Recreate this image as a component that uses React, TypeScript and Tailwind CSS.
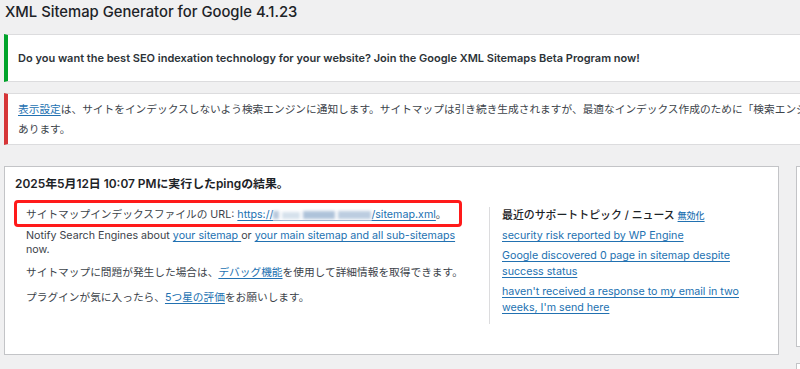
import React from 'react';

const font = { fontFamily: 'Inter, "Noto Sans CJK JP", sans-serif' };

function Link({ children }: { children: React.ReactNode }) {
  return (
    <a href="#" className="text-[#2271b1] underline underline-offset-[2px] decoration-[1px]">
      {children}
    </a>
  );
}

// blurred hostname in the sitemap url
function Blurred() {
  return (
    <span className="inline-flex items-center h-[10px] align-[-1px] gap-[3px] border-b border-[#9db6d3]">
      <span className="w-[6px] h-[8px] bg-[#b7c8dc] blur-[1.5px]" />
      <span className="w-[18px] h-[7px] bg-[#d6e1ec] blur-[1.5px]" />
      <span className="w-[32px] h-[8px] bg-[#aec3da] blur-[1.5px]" />
      <span className="w-[33px] h-[8px] bg-[#bccde0] blur-[1.5px]" />
    </span>
  );
}

export default function App() {
  return (
    <div className="w-[800px] h-[369px] overflow-hidden bg-[#f0f0f1] text-[#3c434a]" style={font}>
      <div className="w-[1100px] pl-[4px]">
        <h1 className="pl-[1px] pt-[3px] h-[22px] text-[14.8px] leading-[18px] font-medium text-[#1d2327]">
          XML Sitemap Generator for Google 4.1.23
        </h1>

        <div className="mt-[12px] h-[48px] flex items-center bg-white border border-[#dcdcde] border-l-[4px] border-l-[#00a32a] pl-[10px]">
          <p className="text-[11px] leading-[15px] font-semibold text-[#2c3338] whitespace-nowrap">
            Do you want the best SEO indexation technology for your website? Join the Google XML Sitemaps Beta Program now!
          </p>
        </div>

        <div className="mt-[11px] bg-white border border-[#dcdcde] border-l-[4px] border-l-[#d63638] pl-[10px] pt-[6px] pb-[4px]">
          <p className="text-[10.7px] leading-[20px] whitespace-nowrap">
            <Link>表示設定</Link>は、サイトをインデックスしないよう検索エンジンに通知します。サイトマップは引き続き生成されますが、最適なインデックス作成のために「検索エンジンがサイトをインデックスしないようにする」の設定を確認する必要が
            <br />
            あります。
          </p>
        </div>

        <div className="flex gap-[17px] mt-[21px] items-start">
          <div className="w-[775px] h-[189px] bg-white border border-[#c3c4c7] pl-[10px] pt-[8px]">
            <h3 className="text-[11.9px] leading-[17px] font-semibold text-[#1d2327]">
              2025年5月12日 10:07 PMに実行したpingの結果。
            </h3>
            <div className="flex mt-[15px] text-[10.7px]">
              <div className="w-[474px] pl-[11px]">
                <div className="relative leading-[15px] whitespace-nowrap">
                  サイトマップインデックスファイルの URL: <Link>https://<Blurred />/sitemap.xml</Link>。
                  <div className="absolute left-[-12px] top-[-7px] w-[448px] h-[27px] border-[3px] border-[#ff1a1a] rounded-[4px]" />
                </div>
                <p className="mt-[7px] leading-[14px]">
                  Notify Search Engines about <Link>your sitemap </Link> or <Link>your main sitemap and all sub-sitemaps</Link>
                  <br />
                  now.
                </p>
                <p className="mt-[8px] leading-[15px]">
                  サイトマップに問題が発生した場合は、<Link>デバッグ機能</Link>を使用して詳細情報を取得できます。
                </p>
                <p className="mt-[10px] leading-[15px]">
                  プラグインが気に入ったら、<Link>5つ星の評価</Link>をお願いします。
                </p>
              </div>
              <div className="h-[117px] border-l border-[#dcdcde] pl-[12px]">
                <h4 className="leading-[16px] text-[10.9px] font-medium text-[#1d2327] whitespace-nowrap">
                  最近のサポートトピック / ニュース <span className="text-[9px]"><Link>無効化</Link></span>
                </h4>
                <ul className="mt-[4px] leading-[16px] whitespace-nowrap">
                  <li><Link>security risk reported by WP Engine</Link></li>
                  <li className="mt-[4px]">
                    <Link>Google discovered 0 page in sitemap despite<br />success status</Link>
                  </li>
                  <li className="mt-[4px]">
                    <Link>haven't received a response to my email in two<br />weeks, I'm send here</Link>
                  </li>
                </ul>
              </div>
            </div>
          </div>
          <div className="flex flex-col gap-[16px]">
            <div className="w-[240px] h-[181px] bg-white border border-[#c3c4c7]" />
            <div className="w-[240px] h-[40px] bg-white border border-[#c3c4c7]" />
          </div>
        </div>
      </div>
    </div>
  );
}
